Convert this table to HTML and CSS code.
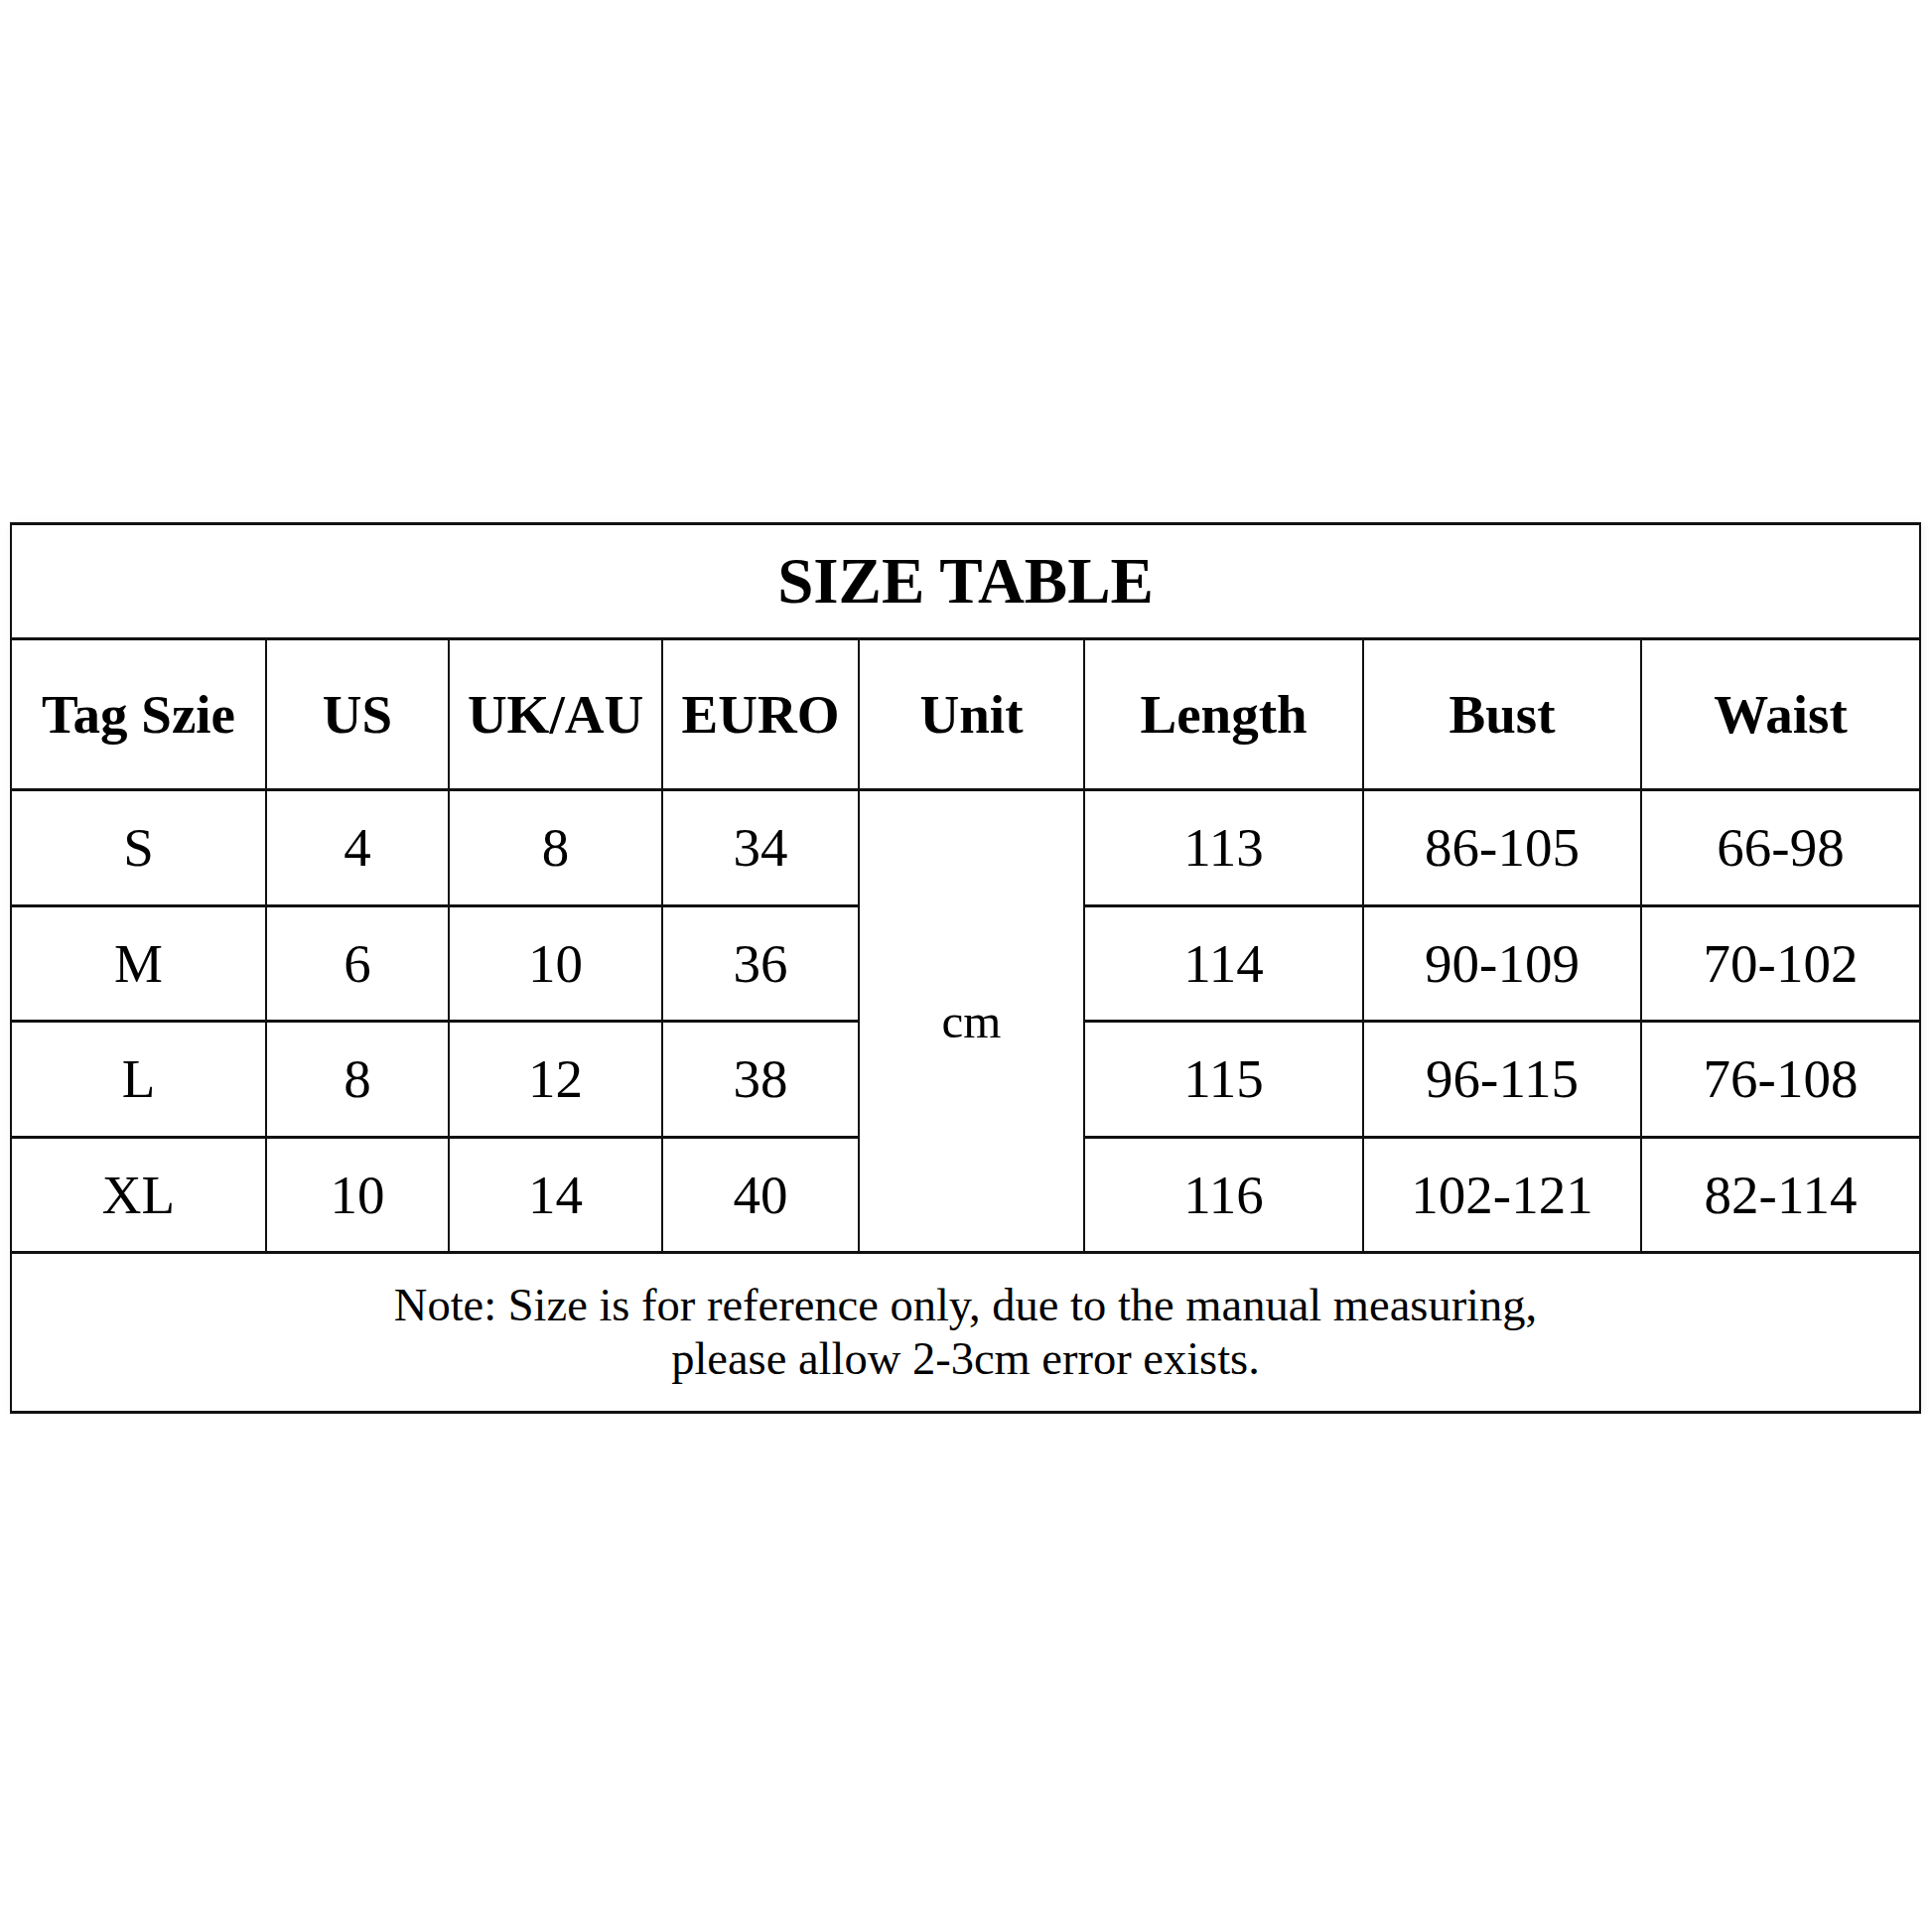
FILE: index.html
```html
<!DOCTYPE html>
<html lang="en">
<head>
<meta charset="utf-8">
<title>Size Table</title>
<link rel="stylesheet" href="styles.css">
</head>
<body>
<main class="page">
  <table class="size-table">
    <colgroup>
      <col class="c-tag">
      <col class="c-us">
      <col class="c-uk">
      <col class="c-euro">
      <col class="c-unit">
      <col class="c-length">
      <col class="c-bust">
      <col class="c-waist">
    </colgroup>
    <thead>
      <tr class="title-row"><th colspan="8" class="title">SIZE TABLE</th></tr>
      <tr class="head-row">
        <th>Tag Szie</th><th>US</th><th>UK/AU</th><th>EURO</th><th>Unit</th><th>Length</th><th>Bust</th><th>Waist</th>
      </tr>
    </thead>
    <tbody>
      <tr class="data-row"><td>S</td><td>4</td><td>8</td><td>34</td><td rowspan="4" class="unit">cm</td><td>113</td><td>86-105</td><td>66-98</td></tr>
      <tr class="data-row"><td>M</td><td>6</td><td>10</td><td>36</td><td>114</td><td>90-109</td><td>70-102</td></tr>
      <tr class="data-row"><td>L</td><td>8</td><td>12</td><td>38</td><td>115</td><td>96-115</td><td>76-108</td></tr>
      <tr class="data-row"><td>XL</td><td>10</td><td>14</td><td>40</td><td>116</td><td>102-121</td><td>82-114</td></tr>
    </tbody>
    <tfoot>
      <tr class="note-row"><td colspan="8" class="note">Note: Size is for reference only, due to the manual measuring,<br>please allow 2-3cm error exists.</td></tr>
    </tfoot>
  </table>
</main>
</body>
</html>
```

FILE: styles.css
```css
html, body {
  margin: 0;
  padding: 0;
  background: #ffffff;
}

.page {
  padding: 526px 0 0 10px;
}

.size-table {
  border-collapse: collapse;
  table-layout: fixed;
  width: 1923px;
  font-family: "Liberation Serif", "Times New Roman", serif;
  color: #000;
  box-shadow: 2px 2px 10px rgba(0, 0, 0, 0.06);
}

.c-tag { width: 257px; }
.c-us { width: 184px; }
.c-uk { width: 215px; }
.c-euro { width: 198px; }
.c-unit { width: 227px; }
.c-length { width: 281px; }
.c-bust { width: 280px; }
.c-waist { width: 281px; }

.size-table th,
.size-table td {
  border-top: 3px solid #111;
  border-bottom: 3px solid #111;
  border-left: 2.5px solid #111;
  border-right: 2.5px solid #111;
  text-align: center;
  vertical-align: middle;
  padding: 0;
  white-space: nowrap;
}

.title-row { height: 116px; }
.title {
  font-size: 65px;
  font-weight: 700;
}

.head-row { height: 152px; }
.head-row th {
  font-size: 55px;
  font-weight: 700;
}

.data-row { height: 116.5px; }
.data-row td {
  font-size: 55px;
  font-weight: 400;
}

.data-row td.unit {
  font-size: 49px;
}

.note-row { height: 161px; }
.note {
  font-size: 46.5px;
  line-height: 54px;
}
```
